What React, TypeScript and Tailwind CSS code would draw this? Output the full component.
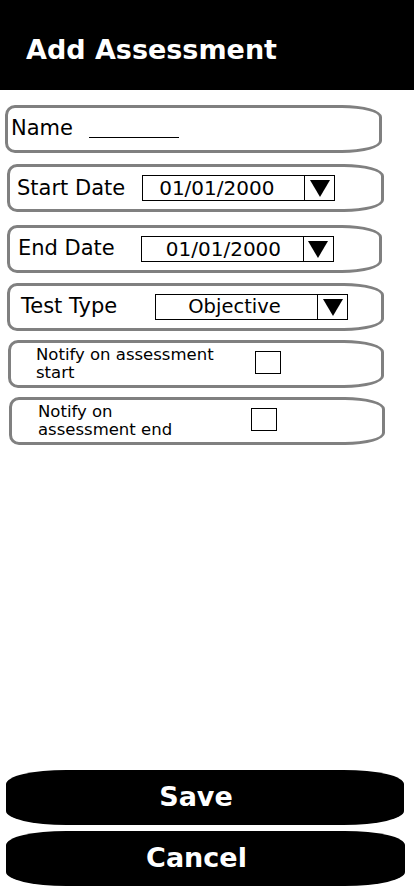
import React from "react";

const rowCls =
  "relative flex items-center border-[3px] border-[#808080] rounded-l-[10px] rounded-r-[40px_12px] h-[48px] bg-white";

function Arrow() {
  return (
    <svg width="22" height="20" viewBox="0 0 22 20">
      <polygon points="1,2 21,2 11,19" fill="#000" />
    </svg>
  );
}

function Select({ value, width, textPad, size }: { value: string; width: number; textPad: number; size: number }) {
  return (
    <div className="flex h-[26px] border border-black items-stretch" style={{ width }}>
      <div className="flex-1 flex items-center leading-none" style={{ paddingLeft: textPad, fontSize: size }}>
        {value}
      </div>
      <div className="w-[30px] border-l border-black flex items-center justify-center">
        <Arrow />
      </div>
    </div>
  );
}

export default function App() {
  return (
    <div
      className="w-[414px] h-[896px] bg-white flex flex-col text-black"
      style={{ fontFamily: '"DejaVu Sans", Verdana, sans-serif' }}
    >
      <div className="h-[90px] bg-black flex items-center pl-[26px] shrink-0">
        <span className="text-white font-bold text-[27px] leading-none mt-[8px]">Add Assessment</span>
      </div>

      <div className={`${rowCls} mt-[15px] ml-[5px] w-[377px]`}>
        <span className="ml-[3px] text-[21px]">Name</span>
        <div className="ml-[16px] w-[90px] h-[1px] bg-black mt-[16px]" />
      </div>

      <div className={`${rowCls} mt-[11px] ml-[7px] w-[377px]`}>
        <span className="ml-[7px] text-[21px] mt-[2px]">Start Date</span>
        <div className="ml-[17px]">
          <Select value="01/01/2000" width={193} textPad={16} size={20} />
        </div>
      </div>

      <div className={`${rowCls} mt-[13px] ml-[7px] w-[375px]`}>
        <span className="ml-[8px] text-[21px]">End Date</span>
        <div className="ml-[26px]">
          <Select value="01/01/2000" width={193} textPad={24} size={20} />
        </div>
      </div>

      <div className={`${rowCls} mt-[10px] ml-[7px] w-[377px]`}>
        <span className="ml-[11px] text-[21px]">Test Type</span>
        <div className="ml-[38px]">
          <Select value="Objective" width={193} textPad={32} size={19.5} />
        </div>
      </div>

      <div className={`${rowCls} mt-[9px] ml-[8px] w-[376px]`}>
        <div className="ml-[25px] w-[200px] text-[16.5px] leading-[18px] whitespace-nowrap">
          Notify on assessment
          <br />
          start
        </div>
        <div className="ml-[19px] w-[26px] h-[23px] border border-black mt-[-4px]" />
      </div>

      <div className={`${rowCls} mt-[9px] ml-[9px] w-[376px]`}>
        <div className="ml-[26px] w-[200px] text-[16.5px] leading-[18px] whitespace-nowrap">
          Notify on
          <br />
          assessment end
        </div>
        <div className="ml-[13px] w-[26px] h-[23px] border border-black mt-[-4px]" />
      </div>

      <div className="flex-1" />

      <div className="ml-[6px] w-[398px] h-[55px] bg-black rounded-[60px/14px] flex items-center justify-center pr-[18px]">
        <span className="text-white font-bold text-[27px]">Save</span>
      </div>
      <div className="mt-[6px] mb-[10px] ml-[6px] w-[399px] h-[55px] bg-black rounded-[60px/14px] flex items-center justify-center pr-[18px]">
        <span className="text-white font-bold text-[27px]">Cancel</span>
      </div>
    </div>
  );
}
